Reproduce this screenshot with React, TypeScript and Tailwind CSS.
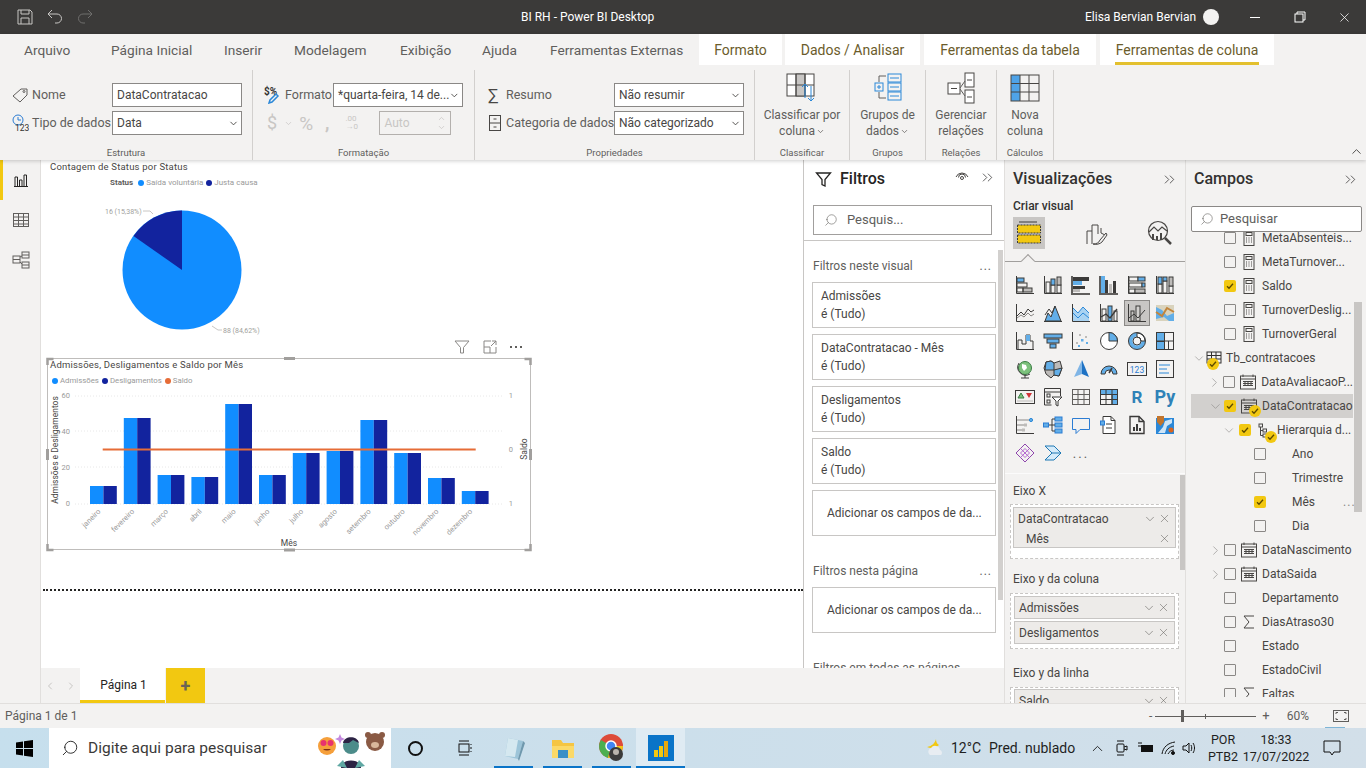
import React from 'react';
import { ChevronDown, ChevronRight, ChevronUp, ChevronsRight, Search, X } from 'lucide-react';

const ink = '#3b3a39';
const blue = '#62aee8';
const grey = '#bdbbb9';

const Ico = ({ size = 20, box = 20, color = ink, width = 1, children }: { size?: number; box?: number; color?: string; width?: number; children: React.ReactNode }) => (
	<svg width={size} height={size} viewBox={`0 0 ${box} ${box}`} fill="none" stroke={color} strokeWidth={width}>
		{children}
	</svg>
);

const Axes = () => <path d="M1.5 1v17.5H19" />;

const vizIcons: React.ReactNode[] = [
	<Ico><path d="M1.5 1v17.5H19" /><rect x="2" y="3" width="7" height="4" fill={blue} /><rect x="2" y="8" width="10" height="4" fill="none" /><rect x="8" y="13" width="9" height="4" fill={grey} /><rect x="2" y="13" width="6" height="4" /></Ico>,
	<Ico><Axes /><rect x="3" y="7" width="4" height="11" /><rect x="8" y="10" width="4" height="8" /><rect x="8" y="4" width="4" height="6" fill={blue} /><rect x="14" y="10" width="4" height="8" /><rect x="14" y="2" width="4" height="8" fill={grey} /></Ico>,
	<Ico color="#605e5c" width={2}><path d="M1 1v18h18" /><rect x="2" y="2" width="16" height="4" fill={ink} stroke="none" /><rect x="2" y="6" width="9" height="4" fill={blue} stroke="none" /><rect x="2" y="11" width="12" height="3" fill={ink} stroke="none" /><rect x="2" y="14" width="7" height="3" fill={grey} stroke="none" /></Ico>,
	<Ico color="#605e5c" width={2}><path d="M1 1v18h18" /><rect x="2" y="1" width="4" height="17" fill={blue} stroke="none" /><rect x="6" y="5" width="3" height="13" fill={ink} stroke="none" /><rect x="10" y="9" width="3" height="9" fill={grey} stroke="none" /><rect x="14" y="6" width="3" height="12" fill={ink} stroke="none" /></Ico>,
	<Ico><Axes /><rect x="2" y="2" width="9" height="4" /><rect x="11" y="2" width="7" height="4" fill={blue} /><rect x="2" y="8" width="13" height="4" /><rect x="15" y="8" width="3" height="4" fill={blue} /><rect x="2" y="14" width="6" height="4" /><rect x="8" y="14" width="10" height="4" fill={grey} /></Ico>,
	<Ico><Axes /><rect x="3" y="9" width="4" height="9" /><rect x="3" y="2" width="4" height="7" fill={blue} /><rect x="8" y="6" width="4" height="12" /><rect x="8" y="2" width="4" height="4" fill={blue} /><rect x="14" y="11" width="4" height="7" /><rect x="14" y="2" width="4" height="9" fill={grey} /></Ico>,

	<Ico><Axes /><path d="M2 13l4-4 3 3 4-6 3 3 3-2" /><path d="M2 15l4-3 3 2 4-4 3 3 3-2" stroke="#8a8886" /></Ico>,
	<Ico><path d="M1 18.5h18" /><path d="M2 18l3-8 3 4 4-11 6 15z" fill={blue} /><path d="M2 12l4-6 3 4 3-7" /></Ico>,
	<Ico><Axes /><path d="M2 5l5 5 5-6 6 6v8H2z" fill="#a9d3f2" stroke="none" /><path d="M2 5l5 5 5-6 6 6M2 10l5 5 5-5 6 5" stroke="#2b88d8" /></Ico>,
	<Ico><Axes /><rect x="3" y="6" width="4" height="12" /><rect x="9" y="3" width="4" height="15" fill={blue} /><rect x="15" y="8" width="3" height="10" /><path d="M2 14l5-3 4 4 7-9" strokeWidth="1.3" /></Ico>,
	<span className="flex h-[26px] w-[26px] items-center justify-center border border-[#8a8886] bg-[#c8c6c4]"><Ico><Axes /><rect x="4" y="8" width="3" height="10" /><rect x="9" y="3" width="4" height="15" fill="#d2d0ce" /><path d="M2 15l5-4 4 4 7-8" /></Ico></span>,
	<Ico><rect x="1" y="2" width="18" height="16" fill="#d9d3bd" stroke="none" /><path d="M1 4l6 3 5 6 7-3v8h-5l-5-4-8 2z" fill={blue} stroke="none" /><path d="M1 9l6 4 5-8 7 4" stroke="#c2853d" strokeWidth="2" /></Ico>,

	<Ico><Axes /><path d="M3 18V9h4v4h4V4h4v6h3v8" /><rect x="11" y="4" width="4" height="6" fill={blue} stroke="none" /></Ico>,
	<Ico><rect x="1" y="3" width="18" height="4" fill={blue} /><rect x="4" y="8" width="12" height="4" fill={blue} /><rect x="7" y="13" width="6" height="4" fill={blue} /></Ico>,
	<Ico><Axes /><g fill={grey} stroke="none"><rect x="8" y="3" width="2" height="2" /><rect x="14" y="5" width="2" height="2" /><rect x="5" y="11" width="2" height="2" /></g><g fill={blue} stroke="none"><rect x="10" y="8" width="2.5" height="2.5" /><rect x="15" y="11" width="2" height="2" /><rect x="7" y="14" width="2" height="2" /></g></Ico>,
	<Ico><circle cx="10" cy="10" r="8.5" fill="#fff" /><path d="M10 1.5a8.5 8.5 0 0 1 8.5 8.5H10z" fill={blue} /></Ico>,
	<Ico><circle cx="10" cy="10" r="6.5" strokeWidth="4" stroke={blue} /><path d="M10 2a8 8 0 0 1 8 8h-4a4 4 0 0 0-4-4z" fill="#fff" /><circle cx="10" cy="10" r="8.5" /><circle cx="10" cy="10" r="4" /></Ico>,
	<Ico><rect x="1.5" y="1.5" width="17" height="17" /><rect x="1.5" y="1.5" width="8" height="17" fill={blue} /><path d="M9.5 10h9M13.5 10v8.5" /><rect x="1.5" y="10" width="8" height="0.5" fill={ink} /></Ico>,

	<Ico><circle cx="10" cy="9" r="6.5" fill="#7cc17c" stroke="#3a7d44" /><path d="M7 5l4 1 1 3-3 3-2-3z" fill="#fff" stroke="none" /><path d="M4 4a8 8 0 0 0 11 11M10 16v3M6 19h8" /></Ico>,
	<Ico><path d="M3 3l5-1 3 2 6-2 2 7-3 8-5-1-3 3-5-4-2-6z" fill={grey} /><path d="M3 3l5-1 3 2v7H2z" fill={blue} /><path d="M11 11l8-2-3 8-5-1z" fill={blue} /></Ico>,
	<Ico color="none"><path d="M11 1L3 18l8-3z" fill="#7fb5e6" /><path d="M11 1l7 17-7-3z" fill="#1e72c4" /></Ico>,
	<Ico><path d="M2 15a8 8 0 0 1 16 0h-4a4 4 0 0 0-8 0z" fill={blue} /><path d="M10 14l3-5" strokeWidth="1.5" /></Ico>,
	<Ico><rect x="0.5" y="3.5" width="19" height="13" /><text x="10" y="13.5" textAnchor="middle" fontSize="8.5" fill="#2b7cd3" stroke="none">123</text></Ico>,
	<Ico><rect x="1.5" y="1.5" width="17" height="17" /><path d="M4 6h11M4 10h8M4 14h10" stroke="#2b88d8" /></Ico>,

	<Ico><rect x="0.5" y="3.5" width="19" height="13" /><path d="M3 11l3-5 3 5z" fill="#7cc17c" stroke="#3a7d44" /><path d="M11 6h6l-3 5z" fill="#d13438" stroke="none" /><path d="M2 14h16" stroke={grey} /></Ico>,
	<Ico><path d="M1.5 11V1.5h16V9M1.5 5h16M1.5 11v7h7" /><rect x="4" y="7" width="3" height="3" /><rect x="4" y="13" width="3" height="3" /><path d="M9 10h10l-4 4v5l-2-1v-4z" fill="#fff" /></Ico>,
	<Ico color="#605e5c"><rect x="1.5" y="2.5" width="17" height="15" /><path d="M1.5 7.5h17M1.5 12.5h17M7 2.5v15M13 2.5v15" /></Ico>,
	<Ico><rect x="1.5" y="2.5" width="17" height="15" /><rect x="1.5" y="2.5" width="17" height="5" fill={blue} /><rect x="13" y="7.5" width="5.5" height="10" fill={blue} /><path d="M1.5 7.5h17M1.5 12.5h17M7 2.5v15M13 2.5v15" /></Ico>,
	<span className="text-[17px] font-bold leading-none text-[#2f82b8]">R</span>,
	<span className="text-[18px] font-bold leading-none text-[#2f82b8]">Py</span>,

	<Ico><Axes /><path d="M2 5h12M2 10h7M2 15h5" stroke="#8a8886" /><circle cx="16" cy="5" r="1.6" fill={blue} stroke="#2b88d8" /><rect x="9" y="8.5" width="3" height="3" fill={grey} stroke="none" /><rect x="7" y="13.5" width="3" height="3" fill={grey} stroke="none" /></Ico>,
	<Ico color="#2b7cd3"><rect x="0.5" y="8" width="5" height="4" fill={blue} /><rect x="12" y="2" width="7" height="4" fill={blue} /><rect x="12" y="8" width="7" height="4" fill={blue} /><rect x="12" y="14" width="7" height="4" fill={blue} /><path d="M6 10h3M9 4v12M9 4h3M9 10h3M9 16h3" stroke={ink} /></Ico>,
	<Ico color="#2b7cd3"><path d="M1.5 3.5h17v11H9l-4 4v-4H1.5z" /></Ico>,
	<Ico><path d="M4 1.5h8l4 4v13H4z" fill="#fff" /><path d="M12 1.5v4h4M7 9h6M7 13h6" /><rect x="1.5" y="6" width="4" height="4" fill={blue} stroke="#2b7cd3" /></Ico>,
	<Ico width={1.4}><path d="M3 1.5h9l5 5v12H3z" /><path d="M12 1.5v5h5" /><rect x="6" y="12" width="2" height="4" fill={ink} stroke="none" /><rect x="9" y="9" width="2" height="7" fill={ink} stroke="none" /><rect x="12" y="13" width="2" height="3" fill={ink} stroke="none" /></Ico>,
	<Ico color="none"><rect x="1" y="3" width="18" height="16" fill="#2b88d8" /><path d="M3 18l5-6 2-6 7-2v4l-5 3-2 7z" fill="#cfe5f7" /><path d="M2 1h7v6l-3.500 4L2 7z" fill="#c2752d" /><circle cx="16" cy="15" r="2.500" fill="#d9641e" /></Ico>,

	<Ico color="#8e44ad"><path d="M10 1l9 9-9 9-9-9z" /><path d="M10 5.500l4.500 4.500L10 14.500 5.500 10zM5.500 5.500l9 9M14.500 5.500l-9 9" stroke="#b66bd1" /></Ico>,
	<Ico color="#1f78b4"><path d="M2 3h9l7 7-7 7H2l7-7z" fill="#d5ebfa" /><path d="M9 10h9" /></Ico>,
	<span className="text-[13px] leading-none tracking-[2px] text-[#605e5c]">...</span>,
];

const Calc = () => (
	<Ico size={18} box={18} color="#484644"><rect x="4" y="1.500" width="10" height="15" /><rect x="6" y="3.500" width="6" height="3" /><path d="M6 9h1M8.500 9h1M11 9h1M6 11h1M8.500 11h1M11 11h1M6 13h1M8.500 13h1M11 13h1" /></Ico>
);
const Cal = () => (
	<Ico size={18} box={18} color="#484644"><rect x="1.500" y="3" width="15" height="13" /><path d="M1.500 6h15M4 1.500V4M14 1.500V4M4 8.500h10M4 10.500h10M4 12.500h10M6 8v5M9 8v5M12 8v5" /></Ico>
);
const Sum = () => <Ico size={18} box={18} color="#484644"><path d="M14 3H4l5 6-5 6h10" /></Ico>;
const Hier = () => (
	<Ico size={15} box={15} color="#484644"><rect x="2" y="1" width="3.500" height="3" /><rect x="6" y="6" width="3.500" height="3" /><rect x="6" y="11" width="3.500" height="3" /><path d="M3.500 4v8.500H6M3.500 7.500H6" /></Ico>
);
const TableIco = () => (
	<Ico size={16} box={16} color="#323130"><rect x="1" y="2" width="14" height="11" /><path d="M1 5.500h14M1 9h14M5.500 2v11M10 2v11" /></Ico>
);

const Tick = () => (
	<svg width="10" height="10" viewBox="0 0 10 10" fill="none" stroke="#5c4a00" strokeWidth="1.300"><path d="M2 5.200l2 2 4-4.400" /></svg>
);

const Check = ({ on }: { on?: boolean }) =>
	on ? (
		<span className="flex h-3 w-3 shrink-0 items-center justify-center rounded-[2px] bg-[#f2c811]"><Tick /></span>
	) : (
		<span className="block h-3 w-3 shrink-0 rounded-[1px] border border-[#8a8886]" />
	);

const Badge = ({ className }: { className: string }) => (
	<span className={`absolute flex h-3 w-3 items-center justify-center rounded-full bg-[#f2c811] ${className}`}><Tick /></span>
);

const Chev = ({ open }: { open?: boolean }) =>
	open ? <ChevronDown size={15} strokeWidth={1} color="#8a8886" /> : <ChevronRight size={15} strokeWidth={1} color="#8a8886" />;

const FieldRow = ({ label, icon, on, chev, open, active }: { label: string; icon?: React.ReactNode; on?: boolean; chev?: boolean; open?: boolean; active?: boolean }) => (
	<div className={`ml-[5px] flex h-6 w-[162px] items-center ${active ? 'bg-[#d2d0ce]' : ''}`}>
		<span className="ml-[15px] flex w-[18px] justify-center">{chev && <Chev open={open} />}</span>
		<Check on={on} />
		<span className="relative flex w-[26px] shrink-0 justify-center">
			{icon}
			{active && <Badge className="left-[13px] top-[8px]" />}
		</span>
		<span className="whitespace-nowrap text-[12px] text-[#484644]">{label}</span>
	</div>
);

const SubRow = ({ label, on, dots }: { label: string; on?: boolean; dots?: boolean }) => (
	<div className="flex h-6 items-center pl-[68px]">
		<Check on={on} />
		<span className="ml-[26px] text-[12px] text-[#484644]">{label}</span>
		{dots && <span className="ml-[28px] text-[12px] leading-none tracking-[1px] text-[#8a8886]">...</span>}
	</div>
);

const FieldsList = () => (
	<div className="relative mt-[-6px]">
		<FieldRow label="MetaAbsenteis..." icon={<Calc />} />
		<FieldRow label="MetaTurnover..." icon={<Calc />} />
		<FieldRow label="Saldo" icon={<Calc />} on />
		<FieldRow label="TurnoverDeslig..." icon={<Calc />} />
		<FieldRow label="TurnoverGeral" icon={<Calc />} />
		<div className="flex h-6 items-center pl-[6px]">
			<span className="flex w-[14px] justify-center"><Chev open /></span>
			<span className="relative flex w-[16px] justify-center">
				<TableIco />
				<Badge className="left-[1px] top-[8px]" />
			</span>
			<span className="ml-[4px] text-[12px] text-[#484644]">Tb_contratacoes</span>
		</div>
		<FieldRow label="DataAvaliacaoP..." icon={<Cal />} chev />
		<FieldRow label="DataContratacao" icon={<Cal />} chev open on active />
		<div className="flex h-6 items-center pl-[36px]">
			<span className="flex w-[14px] justify-center"><Chev open /></span>
			<span className="ml-[3px]"><Check on /></span>
			<span className="relative flex w-[26px] justify-center">
				<Hier />
				<Badge className="left-[14px] top-[8px]" />
			</span>
			<span className="text-[12px] text-[#484644]">Hierarquia d...</span>
		</div>
		<SubRow label="Ano" />
		<SubRow label="Trimestre" />
		<SubRow label="Mês" on dots />
		<SubRow label="Dia" />
		<FieldRow label="DataNascimento" icon={<Cal />} chev />
		<FieldRow label="DataSaida" icon={<Cal />} chev />
		<FieldRow label="Departamento" />
		<FieldRow label="DiasAtraso30" icon={<Sum />} />
		<FieldRow label="Estado" />
		<FieldRow label="EstadoCivil" />
		<FieldRow label="Faltas" icon={<Sum />} />
	</div>
);

const months = ['janeiro', 'fevereiro', 'março', 'abril', 'maio', 'junho', 'julho', 'agosto', 'setembro', 'outubro', 'novembro', 'dezembro'];
const tops = [486, 418, 475, 477, 404, 475, 453, 451, 420, 453, 478, 491];

const ComboChart = () => (
	<svg className="absolute left-0 top-0" width="490" height="198" viewBox="44 355 490 198" fill="none">
		<rect x="47.500" y="358.500" width="483" height="191" stroke="#bfbdbb" />
		{[396, 431, 467, 504].map((y) => (
			<path key={y} d={`M75 ${y}H503`} stroke="#e8e8e8" strokeDasharray="1 2" />
		))}
		{months.map((m, i) => {
			const x = 90 + i * 33.8;
			return (
				<g key={m}>
					<rect x={x} y={tops[i]} width="13.400" height={504 - tops[i]} fill="#118dff" />
					<rect x={x + 13.400} y={tops[i]} width="13.400" height={504 - tops[i]} fill="#12239e" />
					<text x={x + 11} y="512" fontSize="7.500" fill="#9a9a9a" textAnchor="end" transform={`rotate(-45 ${x + 11} 512)`}>{m}</text>
				</g>
			);
		})}
		<path d="M102.700 449.500H475.700" stroke="#e66c37" strokeWidth="1.800" />
		<g fontSize="7.500" fill="#9a9a9a" textAnchor="end">
			<text x="70" y="398">60</text>
			<text x="70" y="434">40</text>
			<text x="70" y="470">20</text>
			<text x="70" y="506">0</text>
			<text x="513" y="398">1</text>
			<text x="513" y="452">0</text>
			<text x="513" y="506">1</text>
		</g>
		<text x="57.500" y="450" fontSize="8.500" fill="#484644" textAnchor="middle" transform="rotate(-90 57.500 450)">Admissões e Desligamentos</text>
		<text x="527" y="449" fontSize="8.500" fill="#484644" textAnchor="middle" transform="rotate(-90 527 449)">Saldo</text>
		<text x="289" y="546" fontSize="8.500" fill="#484644" textAnchor="middle">Mês</text>
		<g stroke="#a19f9d" strokeWidth="2.500">
			<path d="M47.500 365v-6h6M524.500 359h6v6M47.500 544v6h6M524.500 550h6v-6" />
			<path d="M284 358.500h11M284 550h11M47.500 449v11M530.500 449v11" strokeWidth="3" />
		</g>
	</svg>
);

const PieChart = () => (
	<svg className="absolute left-0 top-0" width="300" height="190" viewBox="41 160 300 190" fill="none">
		<circle cx="182" cy="270" r="59.500" fill="#118dff" />
		<path d="M182 270V210.500A59.500 59.500 0 0 0 133.500 236z" fill="#12239e" />
		<path d="M143 211h7l3 3M212 326l6 4h4" stroke="#c8c6c4" />
		<text x="105" y="214" fontSize="7" fill="#a19f9d">16 (15,38%)</text>
		<text x="223" y="333" fontSize="7" fill="#a19f9d">88 (84,62%)</text>
	</svg>
);

const Dot = ({ c }: { c: string }) => <span className="mr-[2px] h-[6px] w-[6px] rounded-full" style={{ background: c }} />;

const FilterCard = ({ a, b }: { a: string; b: string }) => (
	<div className="mb-[6px] h-[46px] w-[184px] border border-[#c8c6c4] bg-white px-2 pt-[4px] text-[12px] leading-[18px] text-[#484644]">
		<div>{a}</div>
		<div>{b}</div>
	</div>
);

const AddCard = () => (
	<div className="flex h-[46px] w-[184px] items-center border border-[#c8c6c4] bg-white pl-[14px] text-[12px] text-[#484644]">Adicionar os campos de da...</div>
);

const DropField = ({ label }: { label: string }) => (
	<div className="flex h-[23px] items-center border border-[#c8c6c4] bg-[#edebe9] pl-[4px] pr-[4px] text-[12px] text-[#484644]">
		<span className="flex-1">{label}</span>
		<ChevronDown size={14} strokeWidth={1} color="#605e5c" />
		<X size={13} strokeWidth={1} color="#605e5c" className="ml-[1px]" />
	</div>
);

const Select = ({ value, w, disabled }: { value: string; w: string; disabled?: boolean }) => (
	<div className={`flex h-6 shrink-0 items-center justify-between border border-[#8a8886] bg-white pl-[4px] pr-[2px] text-[12px] text-[#484644] ${w}`}>
		<span className="whitespace-nowrap">{value}</span>
		{!disabled && <ChevronDown size={11} strokeWidth={2} color="#484644" />}
	</div>
);

const Group = ({ w, label, children }: { w: string; label: string; children: React.ReactNode }) => (
	<div className={`flex h-[90px] shrink-0 flex-col border-r border-[#d2d0ce] ${w}`}>
		<div className="flex-1">{children}</div>
		<div className="pb-[1px] text-center text-[9.5px] leading-[13px] text-[#605e5c]">{label}</div>
	</div>
);

const BigButton = ({ icon, a, b, caret }: { icon: React.ReactNode; a: string; b: string; caret?: boolean }) => (
	<div className="flex flex-col items-center pt-[2px] text-[12px] leading-4 text-[#605e5c]">
		<div className="flex h-[32px] items-center">{icon}</div>
		<div className="mt-[3px]">{a}</div>
		<div className="flex items-center">{b}{caret && <ChevronDown size={9} strokeWidth={2} className="ml-[1px]" />}</div>
	</div>
);

const TopTab = ({ label, className }: { label: string; className: string }) => (
	<span className={`flex h-[31px] items-center whitespace-nowrap pt-[1px] text-[13.7px] text-[#605e5c] ${className}`}>{label}</span>
);

const CtxTab = ({ label, className, active }: { label: string; className: string; active?: boolean }) => (
	<span className={`relative flex h-[31px] items-center justify-center bg-white pt-[1px] text-[14px] text-[#6b5c2b] ${className}`}>
		{label}
		{active && <span className="absolute bottom-0 left-[15px] right-[15px] h-[3px] bg-[#e3c02e]" />}
	</span>
);

const Ribbon = () => (
	<div className="relative z-10 h-[126px] shrink-0 bg-[#f3f2f1] shadow-[0_1px_4px_rgba(0,0,0,0.2)]">
		<div className="flex h-[31px] pl-[24px]">
			<TopTab label="Arquivo" className="w-[87px]" />
			<TopTab label="Página Inicial" className="w-[113px]" />
			<TopTab label="Inserir" className="w-[70px]" />
			<TopTab label="Modelagem" className="w-[106px]" />
			<TopTab label="Exibição" className="w-[82px]" />
			<TopTab label="Ajuda" className="w-[68px]" />
			<TopTab label="Ferramentas Externas" className="w-[149px]" />
			<CtxTab label="Formato" className="w-[83px]" />
			<CtxTab label="Dados / Analisar" className="ml-[3px] w-[135px]" />
			<CtxTab label="Ferramentas da tabela" className="ml-[4px] w-[172px]" />
			<CtxTab label="Ferramentas de coluna" className="ml-[4px] w-[174px]" active />
		</div>
		<div className="flex pt-[5px]">
			<Group w="w-[253px]" label="Estrutura">
				<div className="mt-[13px] flex h-6 items-center pl-[12px] text-[12.5px] text-[#605e5c]">
					<svg width="16" height="16" viewBox="0 0 16 16" fill="none" stroke="#605e5c"><path d="M1 9l8-7 6 0 0 6-7 7z" /><circle cx="12" cy="4.500" r="1" /></svg>
					<span className="ml-[4px] w-[80px]">Nome</span>
					<Select value="DataContratacao" w="w-[130px]" disabled />
				</div>
				<div className="mt-[4px] flex h-6 items-center pl-[12px] text-[12.5px] text-[#605e5c]">
					<svg width="17" height="18" viewBox="0 0 17 18" fill="none" stroke="#2b7cd3"><circle cx="6" cy="6" r="5" /><path d="M6 3v3h3" /><text x="3" y="17" fontSize="8.500" fill="#323130" stroke="none">123</text></svg>
					<span className="ml-[3px] w-[80px] whitespace-nowrap">Tipo de dados</span>
					<Select value="Data" w="w-[130px]" />
				</div>
			</Group>
			<Group w="w-[222px]" label="Formatação">
				<div className="mt-[13px] flex h-6 items-center pl-[11px] text-[12.5px] text-[#605e5c]">
					<span className="relative h-[16px] w-[17px] text-[10px] font-bold leading-[10px] text-[#323130]">
						$%
						<svg className="absolute left-[4px] top-[5px]" width="12" height="12" viewBox="0 0 12 12" fill="none" stroke="#2b88d8" strokeWidth="1.500"><path d="M1 11l1-3 6-6 2 2-6 6z" /></svg>
					</span>
					<span className="ml-[4px] w-[48px]">Formato</span>
					<Select value="*quarta-feira, 14 de..." w="w-[130px]" />
				</div>
				<div className="mt-[4px] flex h-6 items-center pl-[14px] text-[#c8c6c4]">
					<span className="text-[18px] leading-none">$</span>
					<ChevronDown size={9} className="ml-[7px]" />
					<span className="ml-[6px] text-[19px] leading-none">%</span>
					<span className="ml-[12px] text-[18px] font-bold leading-none">,</span>
					<span className="ml-[16px] w-[15px] text-[8px] leading-[8px]">.00<br />→0</span>
					<div className="ml-[19px] flex h-6 w-[72px] items-center justify-between border border-[#b3b0ad] pl-[4px] pr-[4px] text-[12px]">
						Auto
						<span className="flex flex-col">
							<ChevronUp size={9} strokeWidth={2} />
							<ChevronDown size={9} strokeWidth={2} />
						</span>
					</div>
				</div>
			</Group>
			<Group w="w-[280px]" label="Propriedades">
				<div className="mt-[13px] flex h-6 items-center pl-[13px] text-[12.5px] text-[#605e5c]">
					<span className="w-[18px] text-[17px] leading-none text-[#484644]">∑</span>
					<span className="w-[108px]">Resumo</span>
					<Select value="Não resumir" w="w-[130px]" />
				</div>
				<div className="mt-[4px] flex h-6 items-center pl-[14px] text-[12.5px] text-[#605e5c]">
					<svg width="17" height="16" viewBox="0 0 17 16" fill="none" stroke="#484644"><rect x="0.500" y="0.500" width="11" height="15" /><path d="M0.500 8h11M4.500 4h3M4.500 12h3" /></svg>
					<span className="w-[108px] whitespace-nowrap">Categoria de dados</span>
					<Select value="Não categorizado" w="w-[130px]" />
				</div>
			</Group>
			<Group w="w-[95px]" label="Classificar">
				<BigButton a="Classificar por" b="coluna" caret icon={
					<svg width="32" height="32" viewBox="0 0 32 32" fill="none" stroke="#484644"><rect x="1" y="2" width="27" height="22" fill="#fff" /><rect x="10" y="2" width="9" height="22" fill="#c8c6c4" /><path d="M1 13h27M10 2v22M19 2v22" /><path d="M19 12v14M16 15l3-3 3 3" stroke="#2b88d8" /><path d="M25 14v15M22 26l3 3 3-3" stroke="#2b88d8" /></svg>
				} />
			</Group>
			<Group w="w-[76px]" label="Grupos">
				<BigButton a="Grupos de" b="dados" caret icon={
					<svg width="32" height="32" viewBox="0 0 32 32" fill="none" stroke="#2b88d8"><rect x="16" y="2" width="13" height="8" /><rect x="16" y="11" width="13" height="8" /><rect x="16" y="20" width="13" height="8" /><rect x="3" y="11" width="8" height="8" /><path d="M18 6h9M18 15h9M18 24h9M5 15h4M7 13v4" /><path d="M7 10V4h7M7 20v6h7" stroke="#605e5c" /></svg>
				} />
			</Group>
			<Group w="w-[71px]" label="Relações">
				<BigButton a="Gerenciar" b="relações" icon={
					<svg width="32" height="32" viewBox="0 0 32 32" fill="none" stroke="#484644"><rect x="20" y="1" width="9" height="14" fill="#fff" /><rect x="3" y="11" width="12" height="11" fill="#fff" /><rect x="20" y="18" width="9" height="13" fill="#fff" /><path d="M22 8h5M6 16.500h6M22 25h5" /><path d="M15 16l5-7M15 17l5 7" stroke="#605e5c" /></svg>
				} />
			</Group>
			<Group w="w-[57px]" label="Cálculos">
				<BigButton a="Nova" b="coluna" icon={
					<svg width="30" height="28" viewBox="0 0 30 28" fill="none" stroke="#484644"><rect x="1" y="1" width="9" height="26" fill="#4fa3e8" stroke="none" /><rect x="1" y="1" width="28" height="26" /><path d="M1 9.500h28M1 18h28M10 1v26M19 1v26" /></svg>
				} />
			</Group>
		</div>
		<ChevronUp size={15} strokeWidth={1.500} color="#484644" className="absolute bottom-[1px] right-[2px]" />
	</div>
);

const TitleBar = () => (
	<div className="relative flex h-[34px] shrink-0 items-center bg-[#3b3a39] text-white">
		<svg className="ml-[17px]" width="16" height="16" viewBox="0 0 16 16" fill="none" stroke="#c8c6c4"><path d="M1 1h12l2 2v12H1z" /><path d="M4 1v4h8V1M4 15V9h8v6" /></svg>
		<svg className="ml-[14px]" width="16" height="16" viewBox="0 0 16 16" fill="none" stroke="#c8c6c4"><path d="M1 5h9a4.500 4.500 0 0 1 0 9H8M1 5l4-4M1 5l4 4" /></svg>
		<svg className="ml-[14px]" width="16" height="16" viewBox="0 0 16 16" fill="none" stroke="#6f6e6d"><path d="M15 5H6a4.500 4.500 0 0 0 0 9h2M15 5l-4-4M15 5l-4 4" /></svg>
		<span className="absolute left-[521px] text-[12px] text-white">BI RH - Power BI Desktop</span>
		<span className="absolute left-[1085px] text-[12px]">Elisa Bervian Bervian</span>
		<span className="absolute left-[1203px] h-4 w-4 rounded-full bg-[#f3f2f1]" />
		<span className="absolute left-[1250px] h-px w-[10px] bg-white" />
		<svg className="absolute left-[1294px]" width="12" height="12" viewBox="0 0 12 12" fill="none" stroke="#fff"><rect x="1" y="3" width="8" height="8" /><path d="M3 3V1h8v8H9" /></svg>
		<X className="absolute left-[1337px]" size={15} strokeWidth={1.200} />
	</div>
);

const Rail = () => (
	<div className="flex w-[41px] shrink-0 flex-col border-r border-[#e1dfdd] bg-[#f3f2f1]">
		<div className="flex h-10 items-center justify-center border-l-[3px] border-[#f2c811] pr-[2px]">
			<svg width="16" height="16" viewBox="0 0 16 16" fill="none" stroke="#252423"><path d="M1 14.500h14M2 14V5h2.500v9M6.500 14V8H9v6M11 14V3h2.500v11" /></svg>
		</div>
		<div className="flex h-10 items-center justify-center pl-[1px]">
			<svg width="16" height="16" viewBox="0 0 16 16" fill="none" stroke="#605e5c"><rect x="0.500" y="1.500" width="15" height="13" /><path d="M0.500 5h15M0.500 8.500h15M0.500 12h15M5.500 1.500v13M10.500 1.500v13" /></svg>
		</div>
		<div className="flex h-10 items-center justify-center pl-[1px]">
			<svg width="18" height="18" viewBox="0 0 18 18" fill="none" stroke="#605e5c"><rect x="1" y="5" width="7" height="7" /><rect x="10" y="1" width="7" height="6" /><rect x="10" y="11" width="7" height="6" /><path d="M1 8.500h7M10 4h7M10 14h7M8 6l2-1M8 11l2 2" /></svg>
		</div>
	</div>
);

const Canvas = () => (
	<div className="relative w-[762px] shrink-0 overflow-hidden bg-white">
		<div className="relative h-[190px]">
			<PieChart />
			<div className="relative pl-[9px] pt-[1px] text-[9.5px] leading-[11px] tracking-[0.2px] text-[#484644]">Contagem de Status por Status</div>
			<div className="relative mt-[6px] flex items-center pl-[69px] text-[8px] leading-[10px] text-[#9a9a9a]">
				<span className="mr-[5px] font-bold text-[#605e5c]">Status</span>
				<Dot c="#118dff" /><span className="mr-[3px]">Saída voluntária</span>
				<Dot c="#12239e" /><span>Justa causa</span>
			</div>
		</div>
		<div className="absolute left-[413px] top-[179px] flex items-center gap-[12px]">
			<svg width="16" height="16" viewBox="0 0 16 16" fill="none" stroke="#8a8886"><path d="M1 2h14L9.500 8.500V14h-3V8.500z" /></svg>
			<svg width="16" height="16" viewBox="0 0 16 16" fill="none" stroke="#8a8886"><path d="M9 2H2v12h12V8M2 8h6v6M9 7l5-5M10 2h4v4" /></svg>
			<span className="flex gap-[3px]"><i className="h-[2px] w-[2px] bg-[#605e5c]" /><i className="h-[2px] w-[2px] bg-[#605e5c]" /><i className="h-[2px] w-[2px] bg-[#605e5c]" /></span>
		</div>
		<div className="absolute left-[3px] top-[195px] h-[198px] w-[490px]">
			<ComboChart />
			<div className="relative pl-[6px] pt-[4px] text-[9.5px] leading-[11px] tracking-[0.2px] text-[#484644]">Admissões, Desligamentos e Saldo por Mês</div>
			<div className="relative mt-[6px] flex items-center pl-[8px] text-[7.800px] leading-[10px] text-[#9a9a9a]">
				<Dot c="#118dff" /><span className="mr-[3px]">Admissões</span>
				<Dot c="#12239e" /><span className="mr-[3px]">Desligamentos</span>
				<Dot c="#e66c37" /><span>Saldo</span>
			</div>
		</div>
		<div className="absolute left-[2px] right-0 top-[429px] border-t-2 border-dotted border-[#252423]" />
	</div>
);

const FilterPane = () => (
	<div className="relative w-[201px] shrink-0 overflow-hidden border-l border-[#c8c6c4] bg-white">
		<div className="flex h-[37px] items-center pl-[11px] pt-[1px]">
			<svg width="17" height="17" viewBox="0 0 17 17" fill="none" stroke="#252423" strokeWidth="1.300"><path d="M1.500 2h14l-5.500 6.500V15l-3-1.500V8.500z" /></svg>
			<span className="ml-[8px] flex-1 text-[16px] font-medium text-[#252423]">Filtros</span>
			<svg className="mb-[6px] mr-[10px]" width="14" height="12" viewBox="0 0 14 12" fill="none" stroke="#484644"><path d="M1 7a6.500 6.500 0 0 1 12 0M3.500 7.500a3.500 3.500 0 0 1 7 0" /><circle cx="7" cy="8" r="1.500" /></svg>
			<ChevronsRight className="mb-[4px] mr-[8px]" size={17} strokeWidth={1} color="#252423" />
		</div>
		<div className="ml-[9px] mt-[8px] flex h-[30px] w-[179px] items-center border border-[#a19f9d] pl-[10px] text-[13px] text-[#605e5c]">
			<Search size={14} strokeWidth={1} className="-scale-x-100" />
			<span className="ml-[9px]">Pesquis...</span>
		</div>
		<div className="mt-[5px] h-px bg-[#c8c6c4]" />
		<div className="flex h-[41px] items-center justify-between pl-[9px] pr-[12px] pt-[8px] text-[12px] text-[#605e5c]">
			<span>Filtros neste visual</span>
			<span className="tracking-[1px]">...</span>
		</div>
		<div className="pl-[8px]">
			<FilterCard a="Admissões" b="é (Tudo)" />
			<FilterCard a="DataContratacao - Mês" b="é (Tudo)" />
			<FilterCard a="Desligamentos" b="é (Tudo)" />
			<FilterCard a="Saldo" b="é (Tudo)" />
			<AddCard />
			<div className="mt-[26px] flex h-[18px] items-center justify-between pl-[1px] pr-[4px] text-[12px] text-[#605e5c]">
				<span>Filtros nesta página</span>
				<span className="mr-[8px] tracking-[1px]">...</span>
			</div>
			<div className="mt-[7px]"><AddCard /></div>
			<div className="mt-[26px] whitespace-nowrap pl-[1px] text-[12px] text-[#605e5c]">Filtros em todas as páginas</div>
		</div>
		<div className="absolute right-[1px] top-[90px] h-[350px] w-[5px] bg-[#d2d0ce]" />
	</div>
);

const VizPane = () => (
	<div className="relative w-[181px] shrink-0 overflow-hidden border-l border-[#e1dfdd] bg-[#f3f2f1]">
		<div className="flex h-[37px] items-center justify-between pl-[8px] pr-[7px] pt-[1px]">
			<span className="text-[16px] font-medium text-[#323130]">Visualizações</span>
			<ChevronsRight size={17} strokeWidth={1} color="#252423" />
		</div>
		<div className="pl-[8px] pt-[1px] text-[12px] font-medium leading-4 text-[#323130]">Criar visual</div>
		<div className="mt-[3px] flex h-[32px] items-center pl-[8px]">
			<span className="flex h-[32px] w-[32px] items-center justify-center bg-[#c8c6c4]">
				<svg width="26" height="26" viewBox="0 0 26 26" fill="none" stroke="#3b3a39"><path d="M3 2h18" /><rect x="1.500" y="5" width="23" height="8" fill="#f2c811" strokeDasharray="2 1" /><rect x="1.500" y="15" width="23" height="8" fill="#f2c811" strokeDasharray="2 1" /></svg>
			</span>
			<svg className="ml-[38px]" width="26" height="26" viewBox="0 0 26 26" fill="none" stroke="#484644"><path d="M4 24V11h5M9 24V5h6v9M18 8v5l4 2" /><path d="M10 24c3 0 6-1 7-4l6-7 1 2-5 7c-2 2-6 3-9 2z" fill="#f3f2f1" /></svg>
			<svg className="ml-[38px]" width="26" height="26" viewBox="0 0 26 26" fill="none" stroke="#484644" strokeWidth="1.200"><circle cx="11" cy="11" r="9.500" /><path d="M2 12l5-5 4 4 4-4 5 4" /><path d="M6 20v-6M10 20v-4M14 20v-7" strokeWidth="2" /><path d="M18 18l6 6" strokeWidth="2.500" /></svg>
		</div>
		<div className="relative mt-[12px] h-px bg-[#a19f9d]">
			<span className="absolute left-[18px] top-[-5px] h-[10px] w-[10px] rotate-45 border-l border-t border-[#a19f9d] bg-[#f3f2f1]" />
		</div>
		<div className="mt-[9px] grid grid-cols-[repeat(6,28px)] auto-rows-[28px] pl-[6px]">
			{vizIcons.map((icon, i) => (
				<div key={i} className="flex items-center justify-center">{icon}</div>
			))}
		</div>
		<div className="mt-[6px] h-px bg-[#fbfbfb]" />
		<div className="pl-[5px]">
			<div className="flex h-[26px] items-end pl-[3px] text-[12px] text-[#484644]"><span>Eixo X</span></div>
			<div className="mt-[4px] h-[55px] w-[169px] border border-dashed border-[#c8c6c4] bg-white p-[2px]">
				<div className="h-[41px] border border-[#c8c6c4] bg-[#edebe9] pl-[4px] pr-[4px] text-[12px] text-[#484644]">
					<div className="flex h-[21px] items-center">
						<span className="flex-1">DataContratacao</span>
						<ChevronDown size={14} strokeWidth={1} color="#605e5c" />
						<X size={13} strokeWidth={1} color="#605e5c" className="ml-[1px]" />
					</div>
					<div className="flex h-[19px] items-center pl-[8px]">
						<span className="flex-1">Mês</span>
						<X size={13} strokeWidth={1} color="#605e5c" />
					</div>
				</div>
			</div>
			<div className="mt-[12px] h-[16px] pl-[3px] text-[12px] leading-4 text-[#484644]">Eixo y da coluna</div>
			<div className="mt-[6px] h-[56px] w-[169px] border border-dashed border-[#c8c6c4] bg-white px-[3px] pt-[2px]">
				<DropField label="Admissões" />
				<div className="mt-[2px]"><DropField label="Desligamentos" /></div>
			</div>
			<div className="mt-[16px] h-[16px] pl-[3px] text-[12px] leading-4 text-[#484644]">Eixo y da linha</div>
			<div className="mt-[6px] h-[56px] w-[169px] border border-dashed border-[#c8c6c4] bg-white px-[3px] pt-[1px]">
				<DropField label="Saldo" />
			</div>
		</div>
		<div className="absolute right-0 top-[315px] h-[95px] w-[5px] bg-[#c8c6c4]" />
	</div>
);

const FieldsPane = () => (
	<div className="relative w-[181px] shrink-0 overflow-hidden border-l border-[#e1dfdd] bg-[#f3f2f1]">
		<div className="flex h-[37px] items-center justify-between pl-[8px] pr-[7px] pt-[1px]">
			<span className="text-[16px] font-medium text-[#323130]">Campos</span>
			<ChevronsRight size={17} strokeWidth={1} color="#252423" />
		</div>
		<div className="ml-[5px] mt-[9px] flex h-[26px] w-[171px] items-center rounded-[2px] border border-[#8a8886] bg-white pl-[8px] text-[13px] text-[#605e5c]">
			<Search size={14} strokeWidth={1} className="-scale-x-100" />
			<span className="ml-[6px]">Pesquisar</span>
		</div>
		<div className="h-[465px] overflow-hidden">
			<FieldsList />
		</div>
		<div className="absolute right-[4px] top-[142px] h-[210px] w-[8px] bg-[#c8c6c4]" />
	</div>
);

const PageTabs = () => (
	<div className="flex h-[35px] items-stretch bg-[#f3f2f1] pl-[40px]">
		<div className="flex w-[40px] items-center gap-[9px] border-l border-[#e1dfdd] pl-[3px] text-[#c8c6c4]">
			<ChevronRight size={12} className="rotate-180" />
			<ChevronRight size={12} />
		</div>
		<div className="flex w-[85px] items-center justify-center border-b-[3px] border-[#f2c811] bg-white pl-[2px] text-[12px] text-[#252423]"><span className="pt-[1px]">Página 1</span></div>
		<div className="ml-px flex w-[39px] items-center justify-center bg-[#f2c811] text-[18px] font-bold leading-none text-[#6b6456]">+</div>
	</div>
);

const StatusBar = () => (
	<div className="relative flex h-[25px] shrink-0 items-center justify-between border-t border-[#e1dfdd] bg-[#f3f2f1] pl-[5px] text-[#605e5c]">
		<span className="text-[12px]">Página 1 de 1</span>
		<div className="flex items-center pr-[17px] text-[12px]">
			<span className="mr-[3px]">-</span>
			<span className="relative block h-px w-[101px] bg-[#605e5c]">
				<i className="absolute left-[26px] top-[-6px] h-[12px] w-[3px] bg-[#605e5c]" />
				<i className="absolute left-[50px] top-[-2px] h-[5px] w-px bg-[#605e5c]" />
			</span>
			<span className="ml-[6px] text-[13px]">+</span>
			<span className="ml-[17px]">60%</span>
			<svg className="ml-[24px]" width="16" height="12" viewBox="0 0 16 12" fill="none" stroke="#605e5c"><rect x="0.500" y="0.500" width="15" height="11" /><path d="M3 4V2.500h2M11 2.500h2V4M3 8v1.500h2M11 9.500h2V8" /></svg>
		</div>
		<span className="absolute bottom-0 right-[21px] h-px w-[20px] bg-[#7fb5d6]" />
	</div>
);

const AppSlot = ({ children, active }: { children: React.ReactNode; active?: boolean }) => (
	<div className={`relative flex h-[40px] w-[49px] items-center justify-center ${active ? 'bg-[#dfebf3]' : ''}`}>
		{children}
		<span className={`absolute bottom-0 h-[2px] bg-[#0a74c8] ${active ? 'inset-x-0' : 'inset-x-[5px]'}`} />
	</div>
);

const Taskbar = () => (
	<div className="flex h-[40px] shrink-0 items-center bg-gradient-to-r from-[#c6dfed] to-[#d2dfe9] text-[#1f1f1f]">
		<div className="flex w-[49px] justify-center">
			<svg width="17" height="17" viewBox="0 0 17 17" fill="#000"><path d="M0 2.500l7-1v6.500H0zM8 1.300L17 0v8H8zM0 9h7v6.500l-7-1zM8 9h9v8l-9-1.300z" /></svg>
		</div>
		<div className="flex h-[40px] w-[342px] items-center overflow-hidden bg-white pl-[12px] text-[15.5px] text-[#3b3a39]">
			<Search size={18} strokeWidth={1.200} className="-scale-x-100" color="#1f1f1f" />
			<span className="ml-[9px] w-[228px] whitespace-nowrap pt-[1px]">Digite aqui para pesquisar</span>
			<svg width="74" height="40" viewBox="0 0 74 40" className="ml-[-3px] shrink-0">
				<circle cx="14" cy="18" r="9" fill="#f59f3b" />
				<circle cx="10.500" cy="15" r="3" fill="#e8326e" />
				<circle cx="17.500" cy="15" r="3" fill="#e8326e" />
				<path d="M10 21a5 4 0 0 0 8 0z" fill="#7c2d12" />
				<path d="M27 6l1.500 3.500L32 11l-3.500 1.500L27 16l-1.500-3.500L22 11l3.500-1.500z" fill="#c58ade" />
				<circle cx="38" cy="18" r="8" fill="#4c8c8a" />
				<path d="M30 15c1-7 14-8 16 0l-6-3-4 3z" fill="#2c2344" />
				<path d="M28 40c0-10 20-10 20 0z" fill="#2c2344" />
				<path d="M24 38l6-6 4 8zM52 38l-6-6-4 8z" fill="#5fa8a3" />
				<circle cx="62" cy="14" r="9" fill="#8a5a44" />
				<circle cx="55" cy="7" r="3" fill="#8a5a44" />
				<circle cx="69" cy="7" r="3" fill="#8a5a44" />
				<ellipse cx="62" cy="17" rx="4" ry="3" fill="#d9b79b" />
			</svg>
		</div>
		<div className="flex w-[49px] justify-center"><span className="h-[15px] w-[15px] rounded-full border-[2.500px] border-[#111]" /></div>
		<div className="flex w-[49px] justify-center">
			<svg width="16" height="18" viewBox="0 0 16 18" fill="none" stroke="#111"><rect x="2" y="5" width="10" height="8" /><path d="M2 2h10M2 16h10M14 5v1M14 8v2M14 12v1" /></svg>
		</div>
		<AppSlot>
			<svg width="24" height="28" viewBox="0 0 24 28"><path d="M6 4l15 3-5 18-13-3z" fill="#9cc4d8" /><path d="M6 4l10 2-3 17-10-1z" fill="#d5e8f0" /><path d="M21 7l2 2-6 18-1-2z" fill="#6f98ad" /></svg>
		</AppSlot>
		<AppSlot>
			<svg width="24" height="22" viewBox="0 0 24 22"><path d="M1 3h9l2 3h11v15H1z" fill="#f5c542" /><path d="M1 9h22v12H1z" fill="#fbd968" /><rect x="7" y="13" width="10" height="8" fill="#3a8fc7" /></svg>
		</AppSlot>
		<AppSlot>
			<svg width="28" height="30" viewBox="0 0 28 30"><circle cx="13" cy="13" r="12" fill="#dd4b39" /><path d="M13 13L3 7a12 12 0 0 0 7 18z" fill="#4caf50" /><path d="M13 13h12a12 12 0 0 1-12 12l-3 0z" fill="#f5c518" /><circle cx="13" cy="13" r="5" fill="#4285f4" stroke="#fff" strokeWidth="1.500" /><circle cx="18" cy="21" r="7" fill="#3a3a3a" /><circle cx="18" cy="19" r="3" fill="#b9b4ad" /></svg>
		</AppSlot>
		<AppSlot active>
			<span className="flex h-[26px] w-[26px] items-end justify-center gap-[1px] bg-[#0a74c8] pb-[4px]">
				<i className="h-[7px] w-[4px] bg-[#f2c811]" />
				<i className="h-[11px] w-[4px] bg-[#f2c811]" />
				<i className="h-[16px] w-[4px] bg-[#e8a80c]" />
			</span>
		</AppSlot>
		<div className="ml-[239px] flex items-center whitespace-nowrap">
			<svg width="20" height="20" viewBox="0 0 20 20"><path d="M12 1c-1 4-4 7-9 8 4 2 9 1 12-2-2-1-3-3-3-6z" fill="#f2c811" /><path d="M5 16a4 4 0 0 1 2-6 5 5 0 0 1 9 2 3 3 0 0 1 1 5H6z" fill="#e8edf2" /></svg>
			<span className="ml-[7px] w-[28px] text-[14px]">12°C</span>
			<span className="ml-[10px] w-[86px] text-[14px]">Pred. nublado</span>
		</div>
		<ChevronUp className="ml-[14px]" size={17} strokeWidth={1.300} />
		<svg className="ml-[8px]" width="16" height="16" viewBox="0 0 16 16" fill="none" stroke="#111"><rect x="3" y="4" width="7" height="8" rx="1" /><path d="M10 7l3-1v4l-3-1M3 1h7M3 15h7" /></svg>
		<svg className="ml-[8px]" width="16" height="12" viewBox="0 0 16 12"><rect x="3" y="3" width="12" height="7" fill="#111" /><path d="M0 1h4M0 4h4" stroke="#111" /></svg>
		<svg className="ml-[7px]" width="16" height="14" viewBox="0 0 16 14" fill="none" stroke="#111"><path d="M1 13C2 6 7 2 14 1M4 13c1-4 4-7 9-8M7 13c1-2 3-4 6-4" /><circle cx="12" cy="12" r="1.500" fill="#111" /></svg>
		<svg className="ml-[4px]" width="16" height="16" viewBox="0 0 16 16" fill="none" stroke="#111"><path d="M2 6h3l3-3v10l-3-3H2zM10 5c1 2 1 4 0 6M12 3c2 3 2 7 0 10" /></svg>
		<div className="ml-[9px] w-[34px] text-center text-[12.5px] leading-[17px]">
			<div>POR</div>
			<div>PTB2</div>
		</div>
		<div className="ml-[2px] w-[68px] text-center text-[12.5px] leading-[17px]">
			<div>18:33</div>
			<div>17/07/2022</div>
		</div>
		<svg className="ml-[13px]" width="18" height="18" viewBox="0 0 18 18" fill="none" stroke="#111"><path d="M1 2h16v11h-6l-2 3-2-3H1z" /></svg>
	</div>
);

const App = () => {
	return (
		<div className="flex h-[768px] w-[1366px] flex-col overflow-hidden bg-white font-['Roboto',sans-serif]">
			<TitleBar />
			<Ribbon />
			<div className="flex h-[543px] shrink-0">
				<div className="flex w-[1004px] shrink-0 flex-col">
					<div className="flex h-[508px]">
						<Rail />
						<Canvas />
						<FilterPane />
					</div>
					<PageTabs />
				</div>
				<VizPane />
				<FieldsPane />
			</div>
			<StatusBar />
			<Taskbar />
		</div>
	);
};

export default App;
